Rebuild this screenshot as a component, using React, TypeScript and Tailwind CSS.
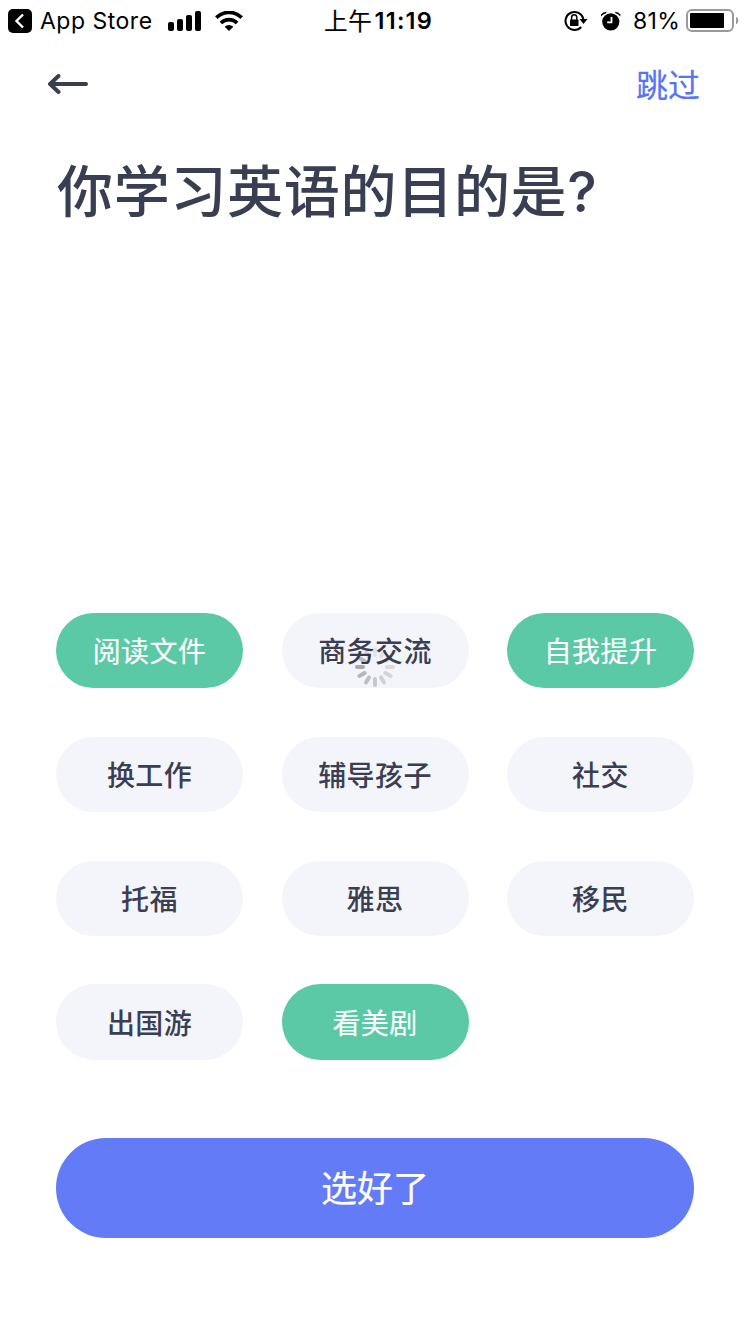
const options = [
  { label: '阅读文件', selected: true },
  { label: '商务交流', selected: false },
  { label: '自我提升', selected: true },
  { label: '换工作', selected: false },
  { label: '辅导孩子', selected: false },
  { label: '社交', selected: false },
  { label: '托福', selected: false },
  { label: '雅思', selected: false },
  { label: '移民', selected: false },
  { label: '出国游', selected: false },
  { label: '看美剧', selected: true },
];

// Opacity of each spoke, clockwise from the top.
const spokes = [0.07, 0.08, 0.09, 0.11, 0.13, 0.15, 0.18, 0.22, 0.26, 0.31, 0.24, 0.12];

function StatusBar() {
  return (
    <header className="flex h-[41px] items-center text-black">
      <div className="flex w-[324px] items-center pl-2">
        <svg width="24" height="24" viewBox="0 0 24 24">
          <rect width="24" height="24" rx="5" />
          <path d="M15 5.500 8.500 12l6.500 6.500" fill="none" stroke="#fff" strokeWidth="2.4" />
        </svg>
        <span className="ml-2 w-[128px] pt-0.5 text-[23px] leading-[41px] tracking-[0.5px] whitespace-nowrap">App Store</span>
        <svg width="34" height="20" viewBox="0 0 34 20">
          <rect x="0" y="11" width="6" height="9" rx="2" />
          <rect x="9" y="8" width="6" height="12" rx="2" />
          <rect x="18" y="4" width="6" height="16" rx="2" />
          <rect x="27" y="0" width="6" height="20" rx="2" />
        </svg>
        <svg className="ml-[13px]" width="28" height="20" viewBox="0 0 28 20">
          <g fill="none" stroke="#000" strokeWidth="3.6">
            <path d="M1.3 6.600a18 18 0 0 1 25.4 0" />
            <path d="M5.9 12a11.5 11.5 0 0 1 16.2 0" />
          </g>
          <path d="M14 20l-4.3-4.3a6.1 6.1 0 0 1 8.6 0z" />
        </svg>
      </div>
      <div className="flex w-[240px] items-center leading-[41px] whitespace-nowrap">
        <span className="pt-0.5 text-[23.500px] tracking-[0.8px] [-webkit-text-stroke:0.2px_currentColor]">上午</span>
        <span className="ml-0.5 text-[23.500px] font-semibold tracking-[1.2px]">11:19</span>
      </div>
      <div className="flex flex-1 items-center">
        <svg width="24" height="22" viewBox="0 0 24 22">
          <path d="M17.200 17A9 9 0 1 1 19.300 9" fill="none" stroke="#000" strokeWidth="2" />
          <path d="M15.5 9h8l-4 5z" />
          <rect x="6" y="9.500" width="8.5" height="6.5" rx="0.8" />
          <path d="M7.6 10V7.400a2.6 2.6 0 0 1 5.2 0v2.600" fill="none" stroke="#000" strokeWidth="1.5" />
        </svg>
        <svg className="ml-3" width="22" height="20" viewBox="0 0 22 20">
          <circle cx="10.8" cy="10.8" r="8.600" />
          <path d="M1 5.500V3.500Q3 1 6.500 .8L6 2.200Q3 3 1 5.500zM20.400 5.500V3.500Q18.500 1 15 .8l.5 1.400Q18.500 3 20.400 5.500z" />
          <path d="M11.5 6v5.4H7.2" fill="none" stroke="#fff" strokeWidth="1.8" />
        </svg>
        <span className="ml-[11px] w-[53px] pt-0.5 text-[23px] leading-[41px] tracking-[0.3px] whitespace-nowrap">81%</span>
        <svg width="54" height="24" viewBox="0 0 54 24">
          <rect x="1" y="1" width="46" height="21" rx="5" fill="none" stroke="#999" strokeWidth="2" />
          <rect x="4" y="4" width="34" height="15" rx="1" />
          <path d="M50 8c3 .6 3 6.400 0 7.200z" fill="#999" />
        </svg>
      </div>
    </header>
  );
}

function Spinner() {
  return (
    <svg className="absolute top-[34px] left-[73.500px]" width="40" height="40" viewBox="-20 -20 40 40">
      {spokes.map((opacity, i) => (
        <rect key={i} x="-2" y="-20" width="4" height="10" rx="2" fill="#000" opacity={opacity} transform={`rotate(${i * 30})`} />
      ))}
    </svg>
  );
}

export default function App() {
  return (
    <main className="flex h-[1334px] w-[750px] flex-col overflow-hidden bg-white font-['Inter','Noto_Sans_CJK_SC',sans-serif] text-[#3a3e52]">
      <StatusBar />
      <nav className="flex h-[86px] items-center justify-between pr-[50px] pl-12">
        <button aria-label="返回">
          <svg width="40" height="20" viewBox="0 0 40 20" fill="none" stroke="currentColor" strokeWidth="4" strokeLinecap="round" strokeLinejoin="round">
            <path d="M38 10H2.500M10.500 2 2 10l8.500 8" />
          </svg>
        </button>
        <button className="pt-[3px] text-[32px] leading-[48px] text-[#5874f6] [-webkit-text-stroke:0.2px_currentColor]">跳过</button>
      </nav>
      <h1 className="mt-[25px] h-20 pl-[57px] text-[56px] leading-20 font-medium tracking-[0.7px] whitespace-nowrap">你学习英语的目的是?</h1>
      <section className="mt-[381px] grid grid-cols-[187px_187px_187px] gap-x-[38.5px] gap-y-[48.5px] pl-14">
        {options.map(({ label, selected }) => (
          <button
            key={label}
            className={`relative flex h-[75.300px] items-center justify-center rounded-full pt-[3px] text-[28px] leading-none tracking-[0.4px] ${
              selected ? 'bg-[#5bc9a5] text-white [-webkit-text-stroke:0.15px_currentColor]' : 'bg-[#f4f5fa] font-medium'
            }`}
          >
            <span>{label}</span>
            {label === '商务交流' && <Spinner />}
          </button>
        ))}
      </section>
      <button className="mx-14 mt-[78.300px] flex h-[100px] shrink-0 items-center justify-center rounded-full bg-[#637bf7] pt-[3px] text-[36px] text-white [-webkit-text-stroke:0.2px_currentColor]">
        选好了
      </button>
    </main>
  );
}
